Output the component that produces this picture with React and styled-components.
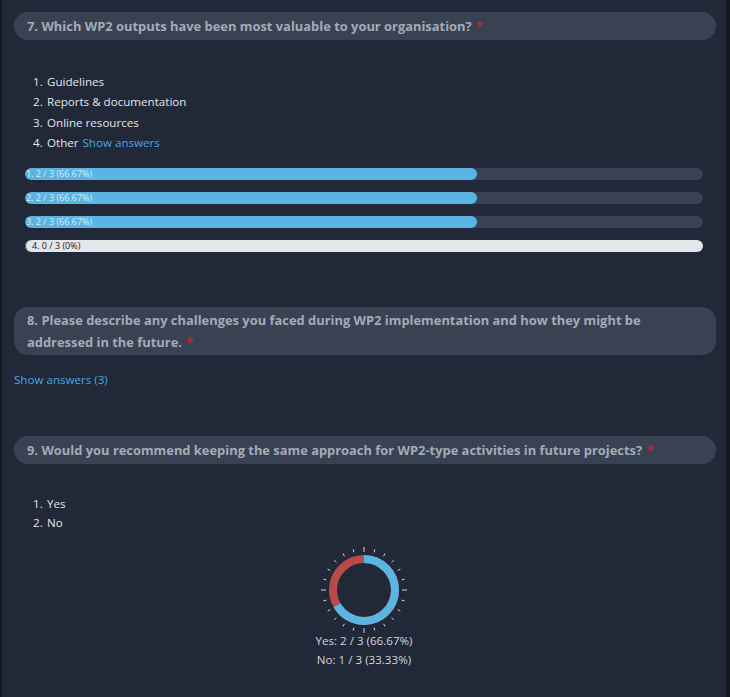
import React from "react";
import styled, { createGlobalStyle } from "styled-components";

const Global = createGlobalStyle`
  html, body { margin: 0; padding: 0; background: #14171d; }
  body { font-family: "Open Sans", "Liberation Sans", sans-serif; }
`;

const Panel = styled.div`
  margin: 0 4px 0 2px;
  min-height: 697px;
  background: #212837;
  padding: 12px 10px 0 12px;
  box-sizing: border-box;
`;

const Section = styled.section`
  padding-bottom: ${(p) => p.$pb || 0}px;
`;

const QHeader = styled.div`
  background: #394253;
  border-radius: 14px;
  padding: ${(p) => (p.$multi ? "2px 30px 2px 13px" : "3px 13px")};
  color: #a3abb7;
  font-weight: 700;
  font-size: 12.9px;
  line-height: 22px;
`;

const Req = styled.span`
  color: #e0141e;
  margin-left: 4px;
`;

const OList = styled.ol`
  margin: ${(p) => p.$mt}px 0 0 0;
  padding-left: 19px;
  list-style: none;
  counter-reset: item;
  color: #e4e7ec;
  font-size: 11.6px;
  line-height: ${(p) => p.$lh}px;
`;

const Item = styled.li`
  counter-increment: item;
  display: flex;
  &::before {
    content: counter(item) ".";
    width: 14px;
    flex: none;
  }
`;

const LinkText = styled.a`
  color: #4ba6e0;
  text-decoration: none;
  cursor: pointer;
  margin-left: ${(p) => p.$ml || 0}px;
  font-size: 11.6px;
`;

const Bars = styled.div`
  display: flex;
  flex-direction: column;
  gap: 12px;
  margin: 15px 13px 0 11px;
`;

const Track = styled.div`
  height: 12px;
  border-radius: 6px;
  background: ${(p) => (p.$empty ? "#e4e6ea" : "#394253")};
  box-shadow: ${(p) => (p.$empty ? "inset 1px 0 0 #555" : "none")};
  overflow: hidden;
  display: flex;
  position: relative;
`;

const Fill = styled.div`
  height: 100%;
  background: #5ab5e2;
  border-radius: 6px;
`;

const BarLabel = styled.span`
  position: absolute;
  left: ${(p) => (p.$empty ? 7 : 1)}px;
  top: 0;
  line-height: 12px;
  font-size: 9px;
  color: ${(p) => (p.$empty ? "#1b1f27" : "#dcecf6")};
  white-space: nowrap;
`;

const ShowAll = styled.div`
  margin-top: 14px;
  line-height: 18px;
`;

const ChartWrap = styled.div`
  display: flex;
  flex-direction: column;
  align-items: center;
  margin-top: 10px;
  margin-right: 2px;
`;

const Legend = styled.div`
  color: #d3d7dd;
  font-size: 11.6px;
  line-height: 19px;
  text-align: center;
  margin-top: -7px;
`;

const bars = [
  { n: 1, v: 2, t: 3 },
  { n: 2, v: 2, t: 3 },
  { n: 3, v: 2, t: 3 },
  { n: 4, v: 0, t: 3 },
];

function Donut() {
  const cx = 48, cy = 48, r = 31;
  const c = 2 * Math.PI * r;
  const blue = c * (2 / 3);
  const ticks = [];
  for (let i = 0; i < 24; i++) {
    const a = (i * 15 * Math.PI) / 180;
    const major = i % 6 === 0;
    const r1 = major ? 38 : 39;
    const r2 = major ? 43 : 42;
    ticks.push(
      <line
        key={i}
        x1={cx + r1 * Math.sin(a)}
        y1={cy - r1 * Math.cos(a)}
        x2={cx + r2 * Math.sin(a)}
        y2={cy - r2 * Math.cos(a)}
        stroke="#d4d8de"
        strokeWidth="1"
      />
    );
  }
  return (
    <svg width="96" height="96" viewBox="0 0 96 96">
      {ticks}
      <g transform={`rotate(-90 ${cx} ${cy})`}>
        <circle cx={cx} cy={cy} r={r} fill="none" stroke="#b84a47" strokeWidth="8" />
        <circle
          cx={cx}
          cy={cy}
          r={r}
          fill="none"
          stroke="#5ab5e2"
          strokeWidth="8"
          strokeDasharray={`${blue} ${c}`}
        />
      </g>
    </svg>
  );
}

export default function App() {
  return (
    <>
      <Global />
      <Panel>
        <Section $pb={55}>
          <QHeader>
            7. Which WP2 outputs have been most valuable to your organisation?<Req>*</Req>
          </QHeader>
          <OList $mt={32} $lh={20.3}>
            <Item>Guidelines</Item>
            <Item>Reports &amp; documentation</Item>
            <Item>Online resources</Item>
            <Item>
              Other<LinkText $ml={4}>Show answers</LinkText>
            </Item>
          </OList>
          <Bars>
            {bars.map((b) => {
              const pct = (b.v / b.t) * 100;
              const label = `${b.n}. ${b.v} / ${b.t} (${pct ? pct.toFixed(2) : 0}%)`;
              return (
                <Track key={b.n} $empty={b.v === 0}>
                  {b.v > 0 && <Fill style={{ width: `${pct}%` }} />}
                  <BarLabel $empty={b.v === 0}>{label}</BarLabel>
                </Track>
              );
            })}
          </Bars>
        </Section>
        <Section $pb={47}>
          <QHeader $multi>
            8. Please describe any challenges you faced during WP2 implementation and how they might be
            addressed in the future.<Req>*</Req>
          </QHeader>
          <ShowAll>
            <LinkText>Show answers (3)</LinkText>
          </ShowAll>
        </Section>
        <Section>
          <QHeader>
            9. Would you recommend keeping the same approach for WP2-type activities in future projects?<Req>*</Req>
          </QHeader>
          <OList $mt={30} $lh={19}>
            <Item>Yes</Item>
            <Item>No</Item>
          </OList>
          <ChartWrap>
            <Donut />
            <Legend>
              <div>Yes: 2 / 3 (66.67%)</div>
              <div>No: 1 / 3 (33.33%)</div>
            </Legend>
          </ChartWrap>
        </Section>
      </Panel>
    </>
  );
}
